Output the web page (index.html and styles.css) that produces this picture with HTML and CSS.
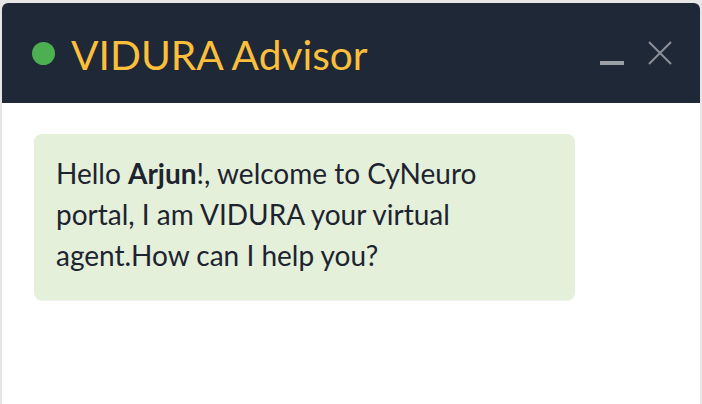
FILE: index.html
```html
<!DOCTYPE html>
<html lang="en">
<head>
<meta charset="utf-8">
<title>VIDURA Advisor</title>
<link rel="stylesheet" href="styles.css">
</head>
<body>
<div class="chat">
  <header class="chat-header">
    <div class="title">
      <span class="status-dot"></span>
      <span class="title-text">VIDURA Advisor</span>
    </div>
    <div class="controls">
      <button class="ctrl minimize" aria-label="Minimize"><span class="bar"></span></button>
      <button class="ctrl close" aria-label="Close">
        <svg width="24" height="24" viewBox="0 0 24 24"><path d="M1 1 L23 23 M23 1 L1 23" stroke="#8b9098" stroke-width="2" fill="none"/></svg>
      </button>
    </div>
  </header>
  <main class="chat-body">
    <div class="bubble">Hello <b>Arjun</b>!, welcome to CyNeuro portal, I am VIDURA your virtual agent.How can I help you?</div>
  </main>
</div>
</body>
</html>
```
FILE: styles.css
```css
html, body {
  margin: 0;
  padding: 0;
}
body {
  background: #e6e6e6;
  padding: 3px 2px 0 2px;
  height: 404px;
  box-sizing: border-box;
  overflow: hidden;
  font-family: Lato, "Noto Sans", sans-serif;
}
.chat {
  background: #ffffff;
  border-radius: 6px 6px 0 0;
  overflow: hidden;
  height: 420px;
}
.chat-header {
  background: #1f2836;
  height: 100px;
  box-sizing: border-box;
  display: flex;
  align-items: center;
  justify-content: space-between;
  padding: 4px 28px 0 30px;
}
.title {
  display: flex;
  align-items: center;
  gap: 16px;
}
.status-dot {
  width: 23px;
  height: 23px;
  border-radius: 50%;
  background: #4caf50;
  margin-top: -3px;
}
.title-text {
  color: #fbbf3b;
  font-size: 40.7px;
  font-weight: 400;
  line-height: 1;
}
.controls {
  display: flex;
  align-items: center;
  gap: 24px;
  margin-top: -4px;
}
.ctrl {
  background: none;
  border: 0;
  padding: 0;
  width: 24px;
  height: 24px;
  display: flex;
  cursor: pointer;
}
.minimize {
  align-items: flex-end;
}
.minimize .bar {
  width: 24px;
  height: 4px;
  background: #9a9ea5;
}
.chat-body {
  padding: 31px 32px;
}
.bubble {
  background: #e4f0da;
  border-radius: 8px;
  width: 541px;
  box-sizing: border-box;
  padding: 19px 32px 24px 22px;
  color: #1d2430;
  font-size: 28px;
  line-height: 41px;
  box-shadow: 0 1px 1px rgba(0,0,0,0.06);
}
.bubble b {
  font-weight: 700;
}
```
